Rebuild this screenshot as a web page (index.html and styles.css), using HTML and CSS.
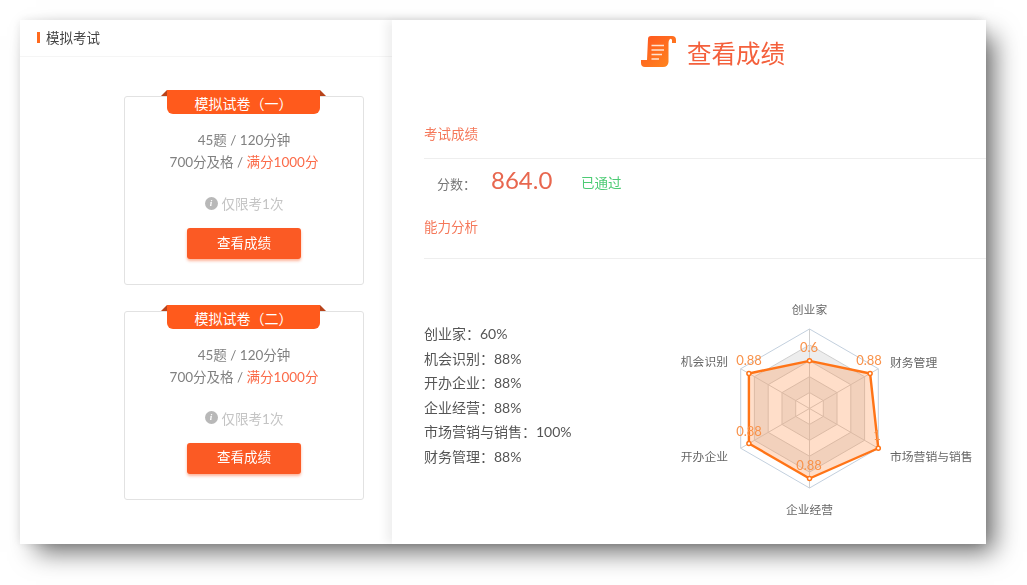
FILE: index.html
```html
<!DOCTYPE html>
<html lang="zh">
<head>
<meta charset="utf-8">
<title>模拟考试</title>
<link rel="stylesheet" href="styles.css">
</head>
<body>
<main class="frame">
  <section class="left">
    <header class="left-head"><span class="mark"></span><span class="left-title">模拟考试</span></header>
    <div class="cards">
      <article class="card">
        <div class="ribbon">模拟试卷（一）</div>
        <p class="info first">45题 / 120分钟</p>
        <p class="info">700分及格 / <span class="hot">满分1000分</span></p>
        <p class="limit"><span class="i">i</span>仅限考1次</p>
        <button class="btn">查看成绩</button>
      </article>
      <article class="card">
        <div class="ribbon">模拟试卷（二）</div>
        <p class="info first">45题 / 120分钟</p>
        <p class="info">700分及格 / <span class="hot">满分1000分</span></p>
        <p class="limit"><span class="i">i</span>仅限考1次</p>
        <button class="btn">查看成绩</button>
      </article>
    </div>
  </section>
  <section class="right">
    <div class="title">
      <svg class="scroll" viewBox="0 0 35 31" width="35" height="31">
        <defs>
          <linearGradient id="sg" x1="0" y1="0" x2="1" y2="1">
            <stop offset="0" stop-color="#ff5420"/>
            <stop offset="1" stop-color="#ff8a1e"/>
          </linearGradient>
        </defs>
        <path fill="url(#sg)" d="M7 3Q7 0 10 0H31Q35 0 35 4V7H31V4Q30 2 28.500 3.500Q27.500 4.500 27.500 7V26Q27 31 22 31H4Q0 31 0 27V24H6Z"/>
        <path fill="none" stroke="#ffe3d2" stroke-width="1.500" d="M10.500 9.500H23M10.500 14H23M10.500 18.500H21M10.500 23H18"/>
      </svg>
      <h1>查看成绩</h1>
    </div>
    <h2 class="label first-label">考试成绩</h2>
    <div class="score">
      <span class="score-name">分数：</span>
      <span class="score-num">864.0</span>
      <span class="pass">已通过</span>
    </div>
    <h2 class="label">能力分析</h2>
    <div class="analysis">
      <ul class="list">
        <li>创业家：60%</li>
        <li>机会识别：88%</li>
        <li>开办企业：88%</li>
        <li>企业经营：88%</li>
        <li>市场营销与销售：100%</li>
        <li>财务管理：88%</li>
      </ul>
      <svg class="radar" viewBox="670 290 316 230" width="316" height="230">
        <path class="band" d="M809.500 344.900L864.600 376.700V440.300L809.500 472.100L754.400 440.300V376.700ZM809.500 360.800L850.800 384.650V432.350L809.500 456.200L768.200 432.350V384.650Z"/>
        <path class="band" d="M809.500 376.700L837 392.600V424.400L809.500 440.300L782 424.400V392.600ZM809.500 392.600L823.300 400.550V416.450L809.500 424.400L795.700 416.450V400.550Z"/>
        <g class="rings">
          <path class="outer" d="M809.500 329L878.300 368.750V448.250L809.500 488L740.700 448.250V368.750Z"/>
          <path d="M809.500 344.900L864.600 376.700V440.300L809.500 472.100L754.400 440.300V376.700Z"/>
          <path d="M809.500 360.800L850.800 384.650V432.350L809.500 456.200L768.200 432.350V384.650Z"/>
          <path d="M809.500 376.700L837 392.600V424.400L809.500 440.300L782 424.400V392.600Z"/>
          <path d="M809.500 392.600L823.300 400.550V416.450L809.500 424.400L795.700 416.450V400.550Z"/>
          <path d="M809.500 329V488M878.300 368.750L740.700 448.250M878.300 448.250L740.700 368.750"/>
        </g>
        <path class="area" d="M809.500 360.800L870.100 373.500L878.300 448.250L809.500 478.500L748.900 443.500V373.500Z"/>
        <g class="dots">
          <circle cx="809.500" cy="360.800" r="2"/>
          <circle cx="870.100" cy="373.500" r="2"/>
          <circle cx="878.300" cy="448.250" r="2"/>
          <circle cx="809.500" cy="478.500" r="2"/>
          <circle cx="748.900" cy="443.500" r="2"/>
          <circle cx="748.900" cy="373.500" r="2"/>
        </g>
        <g class="vals">
          <text x="809" y="352">0.6</text>
          <text x="869" y="365">0.88</text>
          <text x="877" y="440">1</text>
          <text x="809" y="470">0.88</text>
          <text x="749" y="436">0.88</text>
          <text x="749" y="365">0.88</text>
        </g>
        <g class="axis">
          <text x="809.500" y="314" text-anchor="middle">创业家</text>
          <text x="890" y="367">财务管理</text>
          <text x="890" y="461">市场营销与销售</text>
          <text x="809.500" y="514" text-anchor="middle">企业经营</text>
          <text x="728" y="461" text-anchor="end">开办企业</text>
          <text x="728" y="366" text-anchor="end">机会识别</text>
        </g>
      </svg>
    </div>
  </section>
</main>
</body>
</html>
```

FILE: styles.css
```css
* { box-sizing: border-box; }
html, body { margin: 0; height: 100%; background: #fff; }
body {
  padding: 20px 41px 41px 20px;
  overflow: hidden;
  font-family: Lato, "Noto Sans CJK SC", sans-serif;
  color: #666;
}
p, h1, h2, ul { margin: 0; padding: 0; font-weight: 400; }
.frame {
  display: flex;
  width: 966px;
  height: 524px;
  background: #fff;
  box-shadow: 12px 12px 24px -4px rgba(0,0,0,.58), 0 0 10px rgba(0,0,0,.09);
  filter: blur(.6px);
}
.left { width: 372px; flex: none; }
.left-head {
  display: flex;
  align-items: center;
  height: 37px;
  padding-left: 17px;
  border-bottom: 1px solid #f5f5f5;
  font-size: 13px;
  color: #444;
}
.left-title { padding-bottom: 3px; font-size: 13.500px; }
.mark { width: 3px; height: 11px; margin: 0 6px 1px 0; background: #ff6a1e; }
.cards { margin: 39px 0 0 104px; width: 240px; }
.card {
  height: 189px;
  margin-bottom: 25.500px;
  border: 1px solid #e2e2e2;
  border-radius: 3px;
  text-align: center;
}
.ribbon {
  position: relative;
  width: 153px;
  height: 24px;
  margin: -7px 0 0 42px;
  background: #ff5a1c;
  border-radius: 0 0 6px 6px;
  color: #fff;
  font-size: 14px;
  line-height: 27px;
}
.ribbon::before, .ribbon::after {
  content: "";
  position: absolute;
  top: 0;
  border-bottom: 6px solid #b8431a;
}
.ribbon::before { left: -6px; border-left: 6px solid transparent; }
.ribbon::after { right: -6px; border-right: 6px solid transparent; }
.info { font-size: 13.500px; line-height: 22px; color: #808080; }
.info.first { margin-top: 15px; }
.hot { color: #fb6a48; }
.limit {
  display: flex;
  align-items: center;
  justify-content: center;
  margin-top: 20px;
  height: 20px;
  font-size: 13.500px;
  color: #c4c4c4;
}
.i {
  width: 13px;
  height: 13px;
  margin-right: 4px;
  border-radius: 50%;
  background: #b8b8b8;
  color: #fff;
  font: italic 700 9px/13px "Liberation Serif", serif;
}
.btn {
  display: block;
  width: 114px;
  height: 31px;
  margin: 15px 0 0 62px;
  padding: 0 0 4px;
  border: 0;
  border-radius: 3px;
  background: #fb5a24;
  box-shadow: 0 2px 3px rgba(251,90,36,.45);
  color: #fff;
  font: 13.500px Lato, "Noto Sans CJK SC", sans-serif;
}
.right {
  flex: 1;
  padding: 16px 0 0 32px;
  box-shadow: -5px 0 10px rgba(0,0,0,.07);
  background: #fff;
  position: relative;
}
.title { display: flex; align-items: center; height: 31px; margin-left: 217px; }
.scroll { flex: none; margin-right: 11px; }
.title h1 { padding-top: 3px; font-size: 24.500px; line-height: 33px; color: #f4603c; }
.label {
  height: 35px;
  border-bottom: 1px solid #eee;
  font-size: 13.500px;
  line-height: 20px;
  color: #f5785a;
}
.first-label { height: 35px; margin-top: 57px; }
.score { display: flex; align-items: center; height: 44px; padding-left: 13px; }
.score-name { width: 54px; padding-top: 4px; font-size: 13px; color: #777; }
.score-num { width: 90px; padding-bottom: 4px; font-size: 24px; color: #e8674f; }
.pass { font-size: 13.500px; color: #4ccb74; padding-top: 2px; }
.score + .label { margin-top: 14px; height: 42px; }
.analysis { display: flex; }
.list {
  width: 246px;
  flex: none;
  margin-top: 63px;
  list-style: none;
  font-size: 14px;
  line-height: 24.600px;
  color: #555;
}
.radar { flex: none; margin: 31px 0 0 0; overflow: visible; }
.band { fill: #c4c4c4; fill-opacity: .3; fill-rule: evenodd; }
.rings path { fill: none; stroke: #cfcfcf; stroke-width: 1; }
.rings .outer { stroke: #c3d0de; }
.area { fill: #ff8a3c; fill-opacity: .28; stroke: #ff7417; stroke-width: 2.400; stroke-linejoin: round; }
.dots circle { fill: #fff; stroke: #ff7417; stroke-width: 1.500; }
.vals text { fill: #f9924a; font-size: 13px; text-anchor: middle; }
.axis text { fill: #666; font-size: 11.800px; }
```
